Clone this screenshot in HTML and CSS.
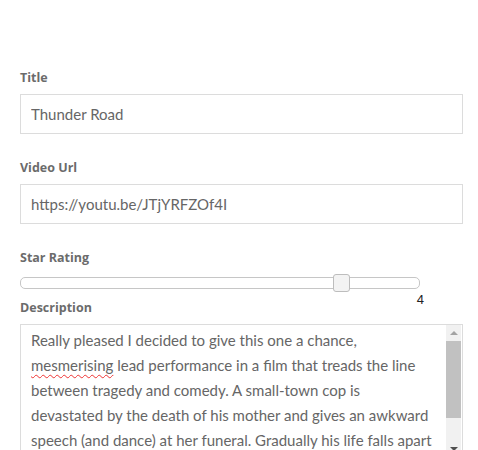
FILE: index.html
```html
<!DOCTYPE html>
<html lang="en">
<head>
  <meta charset="UTF-8">
  <meta name="viewport" content="width=device-width, initial-scale=1.0">
  <title>Edit Review</title>
  <link rel="stylesheet" href="styles.css">
</head>
<body>
  <form class="review-form">
    <label for="title">Title</label>
    <input type="text" id="title" value="Thunder Road">

    <label for="video-url">Video Url</label>
    <input type="text" id="video-url" value="https://youtu.be/JTjYRFZOf4I">

    <label for="rating">Star Rating</label>
    <div class="rating">
      <div class="track"><span class="thumb" style="left: 312px"></span></div>
      <output class="rating-value" for="rating">4</output>
    </div>

    <label for="description" class="desc-label">Description</label>
    <div class="textarea" id="description">
      <div class="textarea-text">Really pleased I decided to give this one a chance,<br>
        <span class="misspelt">mesmerising</span> lead performance in a film that treads the line<br>
        between tragedy and comedy. A small-town cop is<br>
        devastated by the death of his mother and gives an awkward<br>
        speech (and dance) at her funeral. Gradually his life falls apart<br>
        around him as his marriage ends and he fights for custody of<br>
        his daughter.</div>
      <div class="scrollbar">
        <span class="arrow up"></span>
        <span class="bar"></span>
        <span class="arrow down"></span>
      </div>
    </div>
  </form>
</body>
</html>
```

FILE: styles.css
```css
body {
  margin: 0;
  background: #fff;
  font-family: Lato, "Open Sans", sans-serif;
  color: #666;
}
.review-form {
  padding: 69px 15px 0 20px;
  display: flex;
  flex-direction: column;
}
label {
  font-family: "Open Sans", sans-serif;
  font-weight: 700;
  font-size: 12.5px;
  color: #6b6b6b;
  margin-bottom: 8px;
}
input[type="text"] {
  height: 40px;
  box-sizing: border-box;
  border: 1px solid #dcdcdc;
  padding: 0 10px;
  font-family: Lato, sans-serif;
  font-size: 15px;
  color: #666;
  margin-bottom: 25px;
  outline: none;
}
.rating {
  width: 404px;
  display: flex;
  flex-direction: column;
  margin-top: 3px;
}
.track {
  position: relative;
  width: 398px;
  height: 10px;
  border: 1px solid #c6c6c6;
  border-radius: 5px;
  background: #fff;
}
.thumb {
  position: absolute;
  top: -4px;
  width: 15px;
  height: 16px;
  border: 1px solid #bdbdbd;
  border-radius: 3px;
  background: #f3f3f3;
}
.rating-value {
  align-self: flex-end;
  font-family: "Liberation Sans", sans-serif;
  font-size: 13px;
  color: #222;
  line-height: 13px;
  margin-top: 4px;
}
.desc-label {
  margin-top: -7px;
  margin-bottom: 8px;
}
.textarea {
  display: flex;
  height: 131px;
  border: 1px solid #dcdcdc;
  border-bottom: none;
  overflow: hidden;
}
.textarea-text {
  flex: 1;
  padding: 3px 2px 4px 10px;
  font-size: 15px;
  line-height: 25px;
  color: #666;
  white-space: nowrap;
  overflow: hidden;
}
.misspelt {
  text-decoration: underline wavy #e33;
  text-decoration-thickness: 1px;
  text-underline-offset: 3px;
}
.scrollbar {
  width: 15px;
  margin-right: 1px;
  display: flex;
  flex-direction: column;
  align-items: center;
  background: #f1f1f1;
}
.arrow {
  width: 0;
  height: 0;
  border-left: 4px solid transparent;
  border-right: 4px solid transparent;
  margin: 6px 0;
}
.arrow.up {
  border-bottom: 4px solid #a3a3a3;
}
.arrow.down {
  margin: auto 0 5px;
  border-top: 4px solid #505050;
}
.bar {
  width: 15px;
  height: 77px;
  background: #c1c1c1;
}
```
